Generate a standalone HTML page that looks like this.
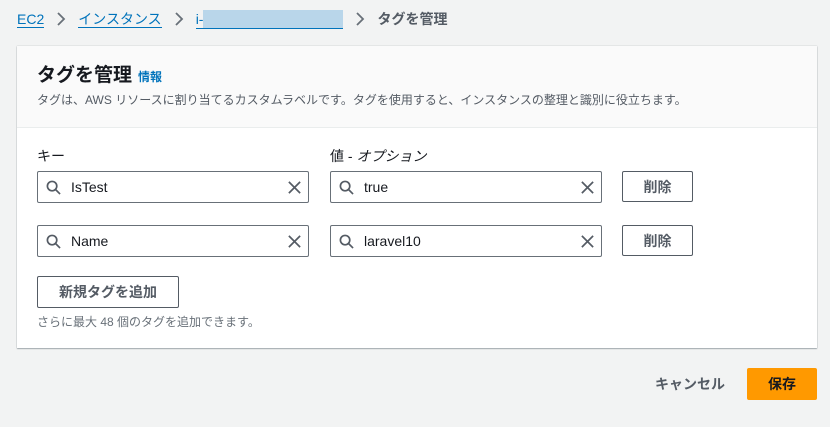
<!DOCTYPE html>
<html><head><meta charset="utf-8"><style>
*{box-sizing:border-box;margin:0;padding:0}
body{width:830px;height:427px;background:#f2f3f3;font-family:"Liberation Sans","Noto Sans CJK JP",sans-serif;color:#16191f;position:relative;overflow:hidden}
.a{position:absolute}
.bc{top:10px;left:17px;font-size:14px;display:flex;align-items:center;height:18px}
.bc a{color:#0073bb;text-decoration:none;border-bottom:1px solid #0073bb;line-height:16px}
.bc .s{margin:0 12px;display:flex}
.card{left:17px;top:46px;width:800px;height:302px;background:#fff;box-shadow:0 1px 1px rgba(0,28,36,.3),0 0 1px rgba(0,28,36,.3)}
.hd{height:82px;background:#fafafa;border-bottom:1px solid #eaeded;padding:17px 20px}
.hd h1{font-size:19px;font-weight:bold;line-height:26px}
.hd h1 span{font-size:12px;color:#0073bb;margin-left:6px}
.hd p{font-size:12px;color:#545b64;margin-top:1px}
.lbl{font-size:14px;color:#16191f}
.in{height:32px;border:1px solid #687078;border-radius:2px;background:#fff;font-size:14px;display:flex;align-items:center;padding-left:8px}
.in svg{margin-right:10px}
.in .x{position:absolute;right:6px;top:8px;margin:0}
.btn{border:1px solid #545b64;border-radius:2px;background:#fff;font-size:14px;font-weight:bold;color:#545b64;display:flex;align-items:center;justify-content:center}
</style></head><body>
<svg width="0" height="0" style="position:absolute"><defs>
<symbol id="q" viewBox="0 0 16 16"><circle cx="6.5" cy="6.5" r="5" fill="none" stroke="#545b64" stroke-width="1.8"/><path d="M10.3 10.3L15 15" stroke="#545b64" stroke-width="1.8"/></symbol>
<symbol id="xx" viewBox="0 0 16 16"><path d="M2 2L14 14M14 2L2 14" stroke="#545b64" stroke-width="1.8"/></symbol>
<symbol id="cv" viewBox="0 0 10 14"><path d="M2 1L8 7L2 13" fill="none" stroke="#687078" stroke-width="1.8"/></symbol></defs></svg>
<div class="a bc"><a>EC2</a><span class="s"><svg width="10" height="14"><use href="#cv"/></svg></span><a>インスタンス</a><span class="s"><svg width="10" height="14"><use href="#cv"/></svg></span><a style="display:flex;align-items:center">i-<span style="display:inline-block;width:140px;height:18px;background:#b9d6ea"></span></a><span class="s"><svg width="10" height="14"><use href="#cv"/></svg></span><span style="color:#545b64;font-weight:bold">タグを管理</span></div>
<div class="a card"><div class="hd"><h1>タグを管理<span>情報</span></h1><p>タグは、AWS リソースに割り当てるカスタムラベルです。タグを使用すると、インスタンスの整理と識別に役立ちます。</p></div></div>
<div class="a lbl" style="left:37px;top:146px">キー</div>
<div class="a lbl" style="left:330px;top:146px">値 - <i>オプション</i></div>
<div class="a in" style="left:37px;top:171px;width:272px"><svg width="15" height="15"><use href="#q"/></svg>IsTest<svg class="x" width="15" height="15"><use href="#xx"/></svg></div>
<div class="a in" style="left:330px;top:171px;width:272px"><svg width="15" height="15"><use href="#q"/></svg>true<svg class="x" width="15" height="15"><use href="#xx"/></svg></div>
<div class="a btn" style="left:622px;top:171px;width:71px;height:31px">削除</div>
<div class="a in" style="left:37px;top:225px;width:272px"><svg width="15" height="15"><use href="#q"/></svg>Name<svg class="x" width="15" height="15"><use href="#xx"/></svg></div>
<div class="a in" style="left:330px;top:225px;width:272px"><svg width="15" height="15"><use href="#q"/></svg>laravel10<svg class="x" width="15" height="15"><use href="#xx"/></svg></div>
<div class="a btn" style="left:622px;top:225px;width:71px;height:31px">削除</div>
<div class="a btn" style="left:37px;top:276px;width:142px;height:32px">新規タグを追加</div>
<div class="a" style="left:37px;top:313px;font-size:12px;color:#687078">さらに最大 48 個のタグを追加できます。</div>
<div class="a" style="left:655px;top:374px;font-size:14px;font-weight:bold;color:#545b64">キャンセル</div>
<div class="a btn" style="left:747px;top:368px;width:70px;height:32px;background:#ff9900;border-color:#ff9900;color:#16191f">保存</div>
</body></html>
